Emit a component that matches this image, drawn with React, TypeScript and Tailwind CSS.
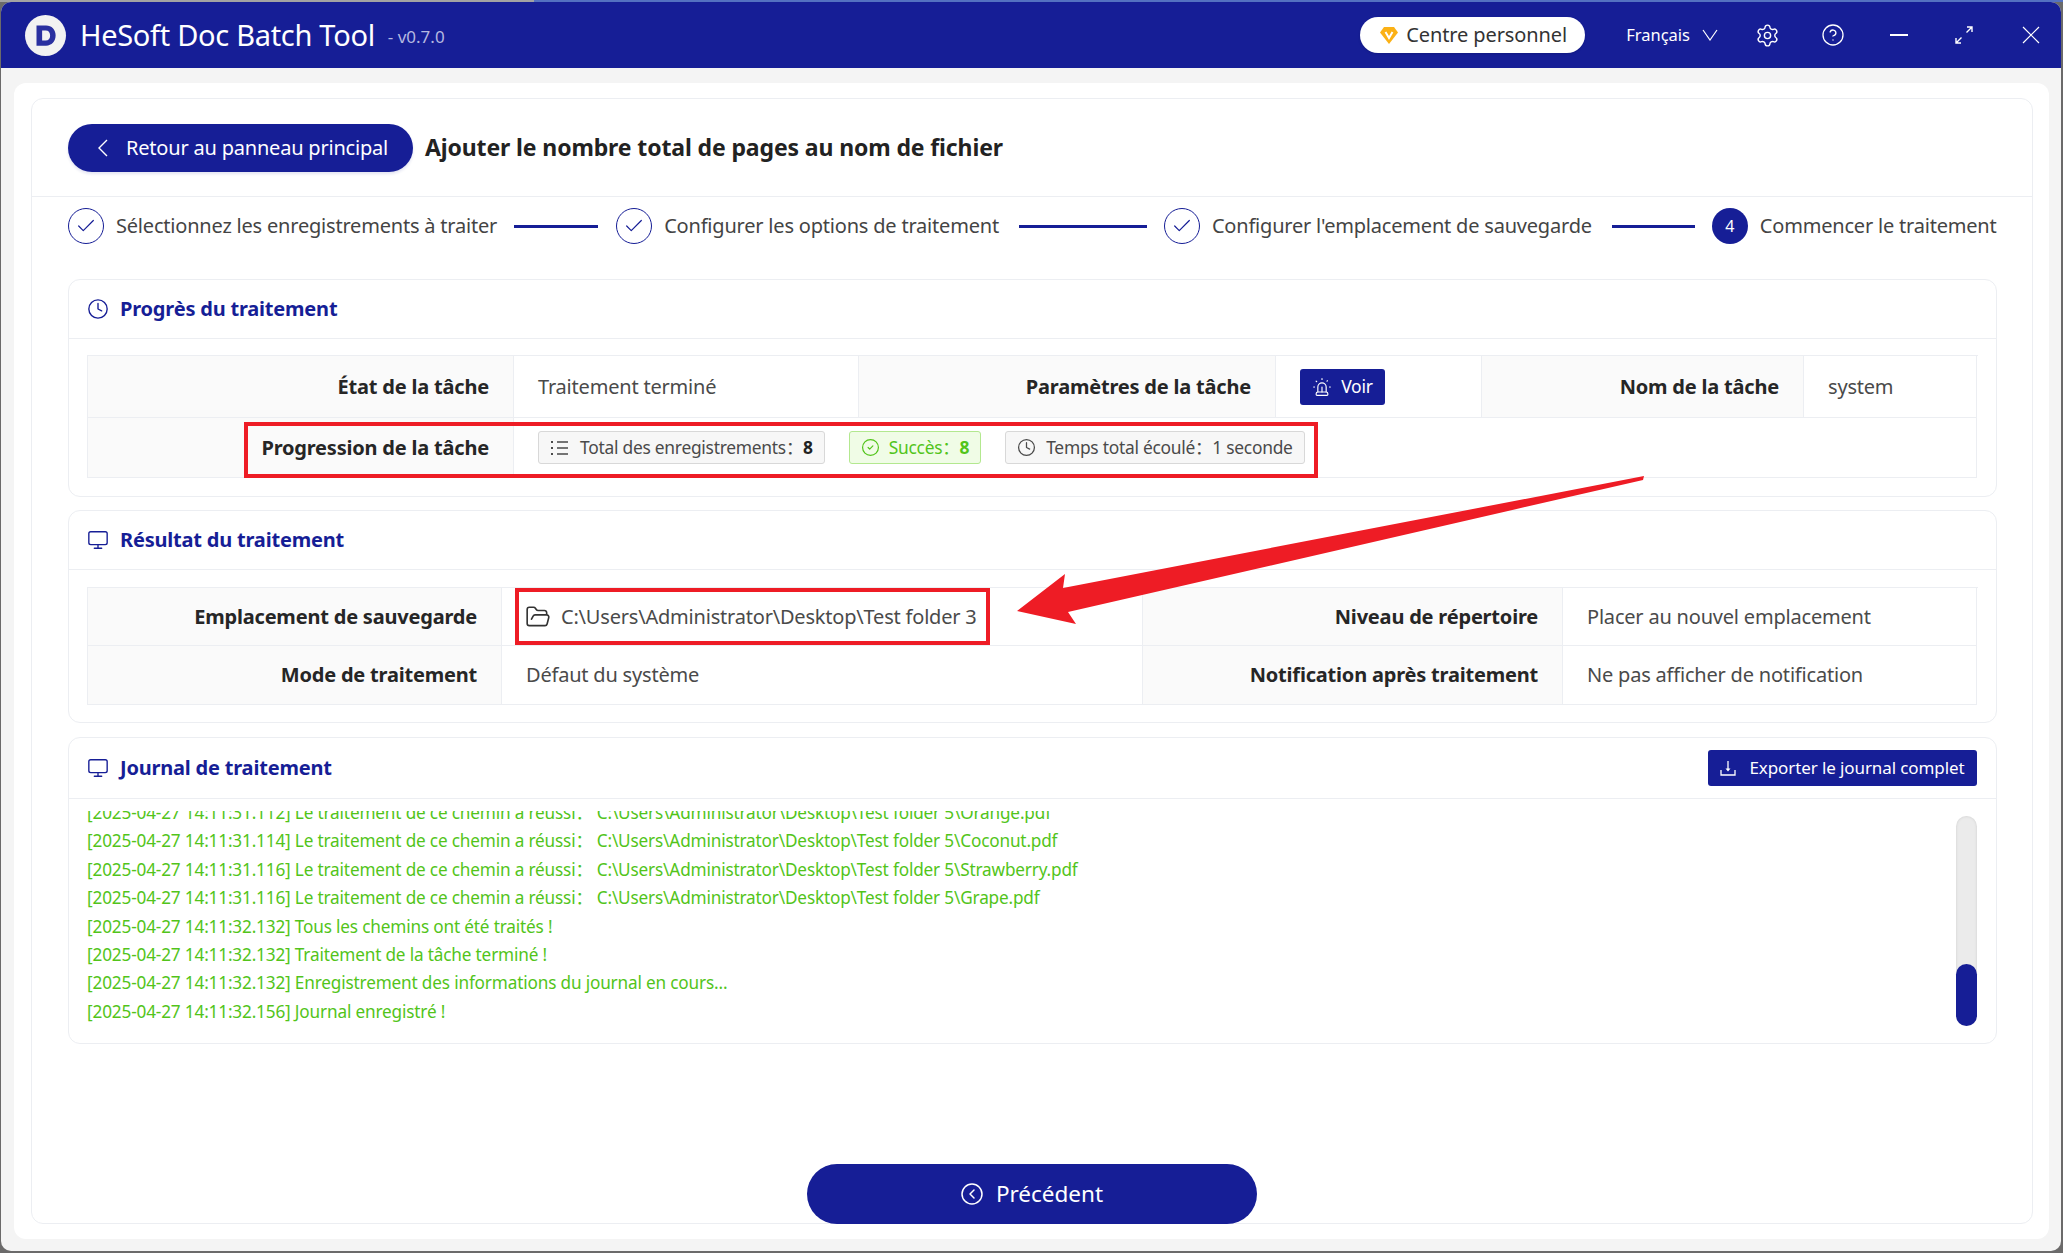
import { Check, CircleCheck, CircleChevronLeft, CircleHelp, Clock, FolderOpen, Monitor, Settings, Siren } from 'lucide-react'
import type { ReactNode } from 'react'

const font = { fontFamily: '"Noto Sans", "Noto Sans CJK SC", sans-serif' }

const logLines = [
  '[2025-04-27 14:11:31.112] Le traitement de ce chemin a réussi： C:\\Users\\Administrator\\Desktop\\Test folder 5\\Orange.pdf',
  '[2025-04-27 14:11:31.114] Le traitement de ce chemin a réussi： C:\\Users\\Administrator\\Desktop\\Test folder 5\\Coconut.pdf',
  '[2025-04-27 14:11:31.116] Le traitement de ce chemin a réussi： C:\\Users\\Administrator\\Desktop\\Test folder 5\\Strawberry.pdf',
  '[2025-04-27 14:11:31.116] Le traitement de ce chemin a réussi： C:\\Users\\Administrator\\Desktop\\Test folder 5\\Grape.pdf',
  '[2025-04-27 14:11:32.132] Tous les chemins ont été traités !',
  '[2025-04-27 14:11:32.132] Traitement de la tâche terminé !',
  '[2025-04-27 14:11:32.132] Enregistrement des informations du journal en cours...',
  '[2025-04-27 14:11:32.156] Journal enregistré !'
]

function Step({ label, num }: { label: string; num?: number }) {
  return (
    <div className="flex items-center gap-3 shrink-0">
      {num ? (
        <div className="w-9 h-9 rounded-full bg-[#161e96] text-white flex items-center justify-center text-[16px]">{num}</div>
      ) : (
        <div className="w-9 h-9 rounded-full border border-[#161e96] text-[#161e96] flex items-center justify-center">
          <Check className="w-[22px] h-[22px]" strokeWidth={1.3} />
        </div>
      )}
      <span className="text-[20px] text-[#444] whitespace-nowrap tracking-[-0.2px]">{label}</span>
    </div>
  )
}

function Card({ icon, title, action, children, className, headerClass }: { icon: ReactNode; title: string; action?: ReactNode; children: ReactNode; className: string; headerClass: string }) {
  return (
    <div className={`border border-[#eceef2] rounded-[12px] ${className}`}>
      <div className={`flex items-center justify-between border-b border-[#eceef2] pl-[18px] pr-[19px] shrink-0 ${headerClass}`}>
        <div className="flex items-center gap-[11px] text-[#161e96]">
          {icon}
          <span className="text-[20px] font-bold tracking-[-0.2px]">{title}</span>
        </div>
        {action}
      </div>
      {children}
    </div>
  )
}

function Label({ children }: { children: ReactNode }) {
  return <div className="bg-[#fafafa] flex items-center justify-end pr-6 text-[20px] font-bold text-[#262626] border-r border-b border-[#eceef2] tracking-[-0.2px] whitespace-nowrap">{children}</div>
}

function Value({ children }: { children: ReactNode }) {
  return <div className="flex items-center pl-6 text-[20px] text-[#4a4a4a] border-r border-b border-[#eceef2] tracking-[-0.2px] whitespace-nowrap">{children}</div>
}

function Tag({ children, green }: { children: ReactNode; green?: boolean }) {
  return (
    <div className={`h-[33px] rounded-[3px] border flex items-center px-[11px] text-[17.4px] tracking-[-0.26px] whitespace-nowrap ${green ? 'bg-[#f0fce6] border-[#b3e88f] text-[#52c41a]' : 'bg-[#f7f7f7] border-[#d8d8d8] text-[#4a4a4a]'}`}>
      {children}
    </div>
  )
}

function ListIcon() {
  return (
    <svg viewBox="0 0 20 20" className="w-5 h-5 mr-[10px]" stroke="currentColor" strokeWidth="1.5" fill="none">
      <path d="M7 4h11M7 10h11M7 16h11" />
      <path d="M2 3v2M2 9v2M2 15v2" strokeWidth="2" />
    </svg>
  )
}

function DownloadIcon() {
  return (
    <svg viewBox="0 0 16 16" className="w-4 h-4" stroke="currentColor" strokeWidth="1.3" fill="none">
      <path d="M1 10v5h14v-5" />
      <path d="M8 1v8" />
      <path d="M5.5 8.5h5L8 11.5z" fill="currentColor" stroke="none" />
    </svg>
  )
}

export default function App() {
  return (
    <div style={font} className="relative w-[2063px] h-[1253px] overflow-hidden bg-[#6b6a6a]">
      <div className="flex h-[2px]">
        <div className="w-[534px] bg-[#a3a3a3]" />
        <div className="flex-1 bg-[#5471c1]" />
      </div>
      <div className="ml-[1px] w-[2060px] h-[1249px] rounded-t-[10px] rounded-b-[10px] overflow-hidden bg-[#f4f4f4] flex flex-col">
        {/* Title bar */}
        <div className="h-[66px] shrink-0 bg-[#161e96] flex items-center text-white relative">
          <div className="ml-[24px] w-[41px] h-[41px] rounded-full bg-[#f2f2f2] flex items-center justify-center">
            <svg viewBox="0 0 24 24" className="w-[27px] h-[27px]">
              <path d="M4 3h8.5c5 0 8.5 3.6 8.5 8.8 0 5.4-3.5 9.2-8.5 9.2H4zM9 7.5v9h3.2c2.4 0 3.9-1.8 3.9-4.6 0-2.7-1.5-4.4-3.9-4.4z" fill="#2a30a0" fillRule="evenodd" />
            </svg>
          </div>
          <span className="ml-[14px] text-[29px] tracking-[-0.3px] whitespace-nowrap">HeSoft Doc Batch Tool</span>
          <span className="ml-[13px] text-[17px] text-[#b4b8e0] mt-[3px] whitespace-nowrap">- v0.7.0</span>
          <div className="ml-auto mr-[18px] flex items-center">
            <div className="w-[225px] h-[36px] rounded-full bg-white text-[#333] flex items-center pl-[19px] mr-[41px] shadow-sm">
              <svg viewBox="0 0 20 20" className="w-5 h-5 mr-[7px]">
                <path d="M5 2h10l4 5.5L10 19 1 7.5z" fill="#fbb116" />
                <path d="M6.5 7 10 13l3.5-6" fill="none" stroke="#fff" strokeWidth="2" />
              </svg>
              <span className="text-[20px] whitespace-nowrap tracking-[-0.1px]">Centre personnel</span>
            </div>
            <span className="text-[16.5px] whitespace-nowrap">Français</span>
            <svg viewBox="0 0 16 12" className="w-4 h-3 ml-[12px] mr-[37px]" fill="none" stroke="currentColor" strokeWidth="1.2">
              <path d="M1 1l7 10 7-10" />
            </svg>
            <div className="flex items-center gap-[41px]">
              <Settings className="w-[25px] h-[25px]" strokeWidth={1.35} />
              <CircleHelp className="w-6 h-6" strokeWidth={1.3} />
              <svg viewBox="0 0 18 18" className="w-[18px] h-[18px] ml-[4px] mr-[3px]" stroke="currentColor" strokeWidth="1.8" fill="none">
                <path d="M0 9h18" />
              </svg>
              <svg viewBox="0 0 18 18" className="w-[18px] h-[18px] mx-[3px]" stroke="currentColor" strokeWidth="1.4" fill="none">
                <path d="M12 1h5v5M17 1l-5.5 5.5M6 17H1v-5M1 17l5.5-5.5" />
              </svg>
              <svg viewBox="0 0 18 18" className="w-[18px] h-[18px] ml-[5px] mr-[3px]" stroke="currentColor" strokeWidth="1.2" fill="none">
                <path d="M1 1l16 16M17 1 1 17" />
              </svg>
            </div>
          </div>
        </div>

        {/* Body */}
        <div className="flex-1 min-h-0 pl-[13px] pr-[12px] pt-[15px] pb-[12px]">
          <div className="h-full bg-white rounded-[12px] pl-[17px] pr-[16px] pt-[15px] pb-[15px]">
            <div className="h-full border border-[#eceef2] rounded-[12px] flex flex-col">
              <div className="h-[98px] shrink-0 border-b border-[#eceef2] pl-[36px] flex items-center">
                <button className="h-[48px] w-[345px] rounded-full bg-[#161e96] text-white flex items-center pl-[28px] shadow-[0_2px_3px_rgba(22,30,150,0.12)]">
                  <svg viewBox="0 0 13 18" className="w-[13px] h-[18px] mr-[17px]" fill="none" stroke="currentColor" strokeWidth="1.4">
                    <path d="M11 1 3 9l8 8" />
                  </svg>
                  <span className="text-[20px] whitespace-nowrap tracking-[-0.2px]">Retour au panneau principal</span>
                </button>
                <h1 className="ml-[12px] text-[23px] font-bold text-[#222] whitespace-nowrap tracking-[-0.12px]">Ajouter le nombre total de pages au nom de fichier</h1>
              </div>

              <div className="flex items-center h-[57px] shrink-0 pl-[36px] pt-[1px]">
                <Step label="Sélectionnez les enregistrements à traiter" />
                <div className="w-[84px] h-[3px] bg-[#161e96] ml-[17px] mr-[18px]" />
                <Step label="Configurer les options de traitement" />
                <div className="w-[128px] h-[3px] bg-[#161e96] ml-[20px] mr-[17px]" />
                <Step label="Configurer l'emplacement de sauvegarde" />
                <div className="w-[83px] h-[3px] bg-[#161e96] ml-[20px] mr-[17px]" />
                <Step label="Commencer le traitement" num={4} />
              </div>

              <div className="flex-1 min-h-0 pl-[36px] pr-[35px] pt-[25px] flex flex-col">
                <Card
                  className="h-[218px] shrink-0"
                  headerClass="h-[59px]"
                  icon={<Clock className="w-[22px] h-[22px]" strokeWidth={1.5} />}
                  title="Progrès du traitement"
                >
                  <div className="mx-[18px] mt-[16px] border-t border-l border-[#eceef2] grid grid-cols-[426px_345px_417px_206px_322px_173px] grid-rows-[62px_60px]">
                    <Label>État de la tâche</Label>
                    <Value>Traitement terminé</Value>
                    <Label>Paramètres de la tâche</Label>
                    <Value>
                      <button className="h-[36px] w-[85px] rounded-[3px] bg-[#161e96] text-white text-[17.5px] flex items-center justify-center gap-[9px]">
                        <Siren className="w-5 h-5" strokeWidth={1.4} />
                        Voir
                      </button>
                    </Value>
                    <Label>Nom de la tâche</Label>
                    <Value>system</Value>
                    <Label>Progression de la tâche</Label>
                    <div className="col-span-5 flex items-center gap-6 pl-6 border-r border-b border-[#eceef2]">
                      <Tag>
                        <ListIcon />
                        <span>Total des enregistrements：</span>
                        <b className="text-[#222]">8</b>
                      </Tag>
                      <Tag green>
                        <CircleCheck className="w-[19px] h-[19px] mr-[9px]" strokeWidth={1.5} />
                        <span>Succès：</span>
                        <b>8</b>
                      </Tag>
                      <Tag>
                        <Clock className="w-[19px] h-[19px] mr-[10px]" strokeWidth={1.6} />
                        <span>Temps total écoulé：</span>
                        <span>1 seconde</span>
                      </Tag>
                    </div>
                  </div>
                </Card>

                <Card
                  className="h-[213px] shrink-0 mt-[13px]"
                  headerClass="h-[59px]"
                  icon={<Monitor className="w-[22px] h-[22px]" strokeWidth={1.5} />}
                  title="Résultat du traitement"
                >
                  <div className="mx-[18px] mt-[17px] border-t border-l border-[#eceef2] grid grid-cols-[414px_641px_420px_414px] grid-rows-[58px_59px]">
                    <Label>Emplacement de sauvegarde</Label>
                    <Value>
                      <FolderOpen className="w-[26px] h-[26px] -ml-[1px] mr-[10px] text-[#333]" strokeWidth={1.5} />
                      C:\Users\Administrator\Desktop\Test folder 3
                    </Value>
                    <Label>Niveau de répertoire</Label>
                    <Value>Placer au nouvel emplacement</Value>
                    <Label>Mode de traitement</Label>
                    <Value>Défaut du système</Value>
                    <Label>Notification après traitement</Label>
                    <Value>Ne pas afficher de notification</Value>
                  </div>
                </Card>

                <Card
                  className="h-[307px] shrink-0 mt-[14px] flex flex-col"
                  headerClass="h-[61px]"
                  icon={<Monitor className="w-[22px] h-[22px]" strokeWidth={1.5} />}
                  title="Journal de traitement"
                  action={
                    <button className="h-[36px] w-[269px] rounded-[3px] bg-[#161e96] text-white flex items-center justify-center gap-[13px]">
                      <DownloadIcon />
                      <span className="text-[17px] whitespace-nowrap tracking-[-0.1px]">Exporter le journal complet</span>
                    </button>
                  }
                >
                  <div className="flex-1 min-h-0 flex pl-[18px] pr-[19px] pt-[12px] pb-[16px]">
                    <div className="flex-1 min-w-0 overflow-hidden">
                      <div className="-mt-[12px] flex flex-col">
                        {logLines.map((line) => (
                          <div key={line} className="h-[28.4px] leading-[28.4px] text-[17.2px] text-[#52c41a] whitespace-nowrap tracking-[-0.17px]">{line}</div>
                        ))}
                      </div>
                    </div>
                    <div className="w-[21px] h-[210px] mt-[5px] rounded-full bg-[#ebebeb] shadow-[inset_0_0_3px_rgba(0,0,0,0.12)] flex items-end shrink-0">
                      <div className="w-full h-[62px] rounded-full bg-[#161e96]" />
                    </div>
                  </div>
                </Card>

                <div className="flex-1 flex items-end justify-center -mb-px">
                  <button className="w-[450px] h-[60px] mr-[2px] rounded-full bg-[#161e96] text-white flex items-center justify-center gap-[12px]">
                    <CircleChevronLeft className="w-6 h-6" strokeWidth={1.5} />
                    <span className="text-[22.5px] whitespace-nowrap">Précédent</span>
                  </button>
                </div>
              </div>
            </div>
          </div>
        </div>
      </div>

      {/* Annotations over the screenshot */}
      <div className="absolute left-[244px] top-[422px] w-[1074px] h-[56px] border-4 border-[#ee1c25]" />
      <div className="absolute left-[515px] top-[588px] w-[475px] h-[57px] border-4 border-[#ee1c25]" />
      <svg className="absolute left-0 top-0 w-[2063px] h-[1253px] pointer-events-none" viewBox="0 0 2063 1253">
        <path d="M1644 476 1643 480 1068 612 1076 624 1017 611 1065 574 1063 588z" fill="#ee1c25" />
      </svg>
    </div>
  )
}
